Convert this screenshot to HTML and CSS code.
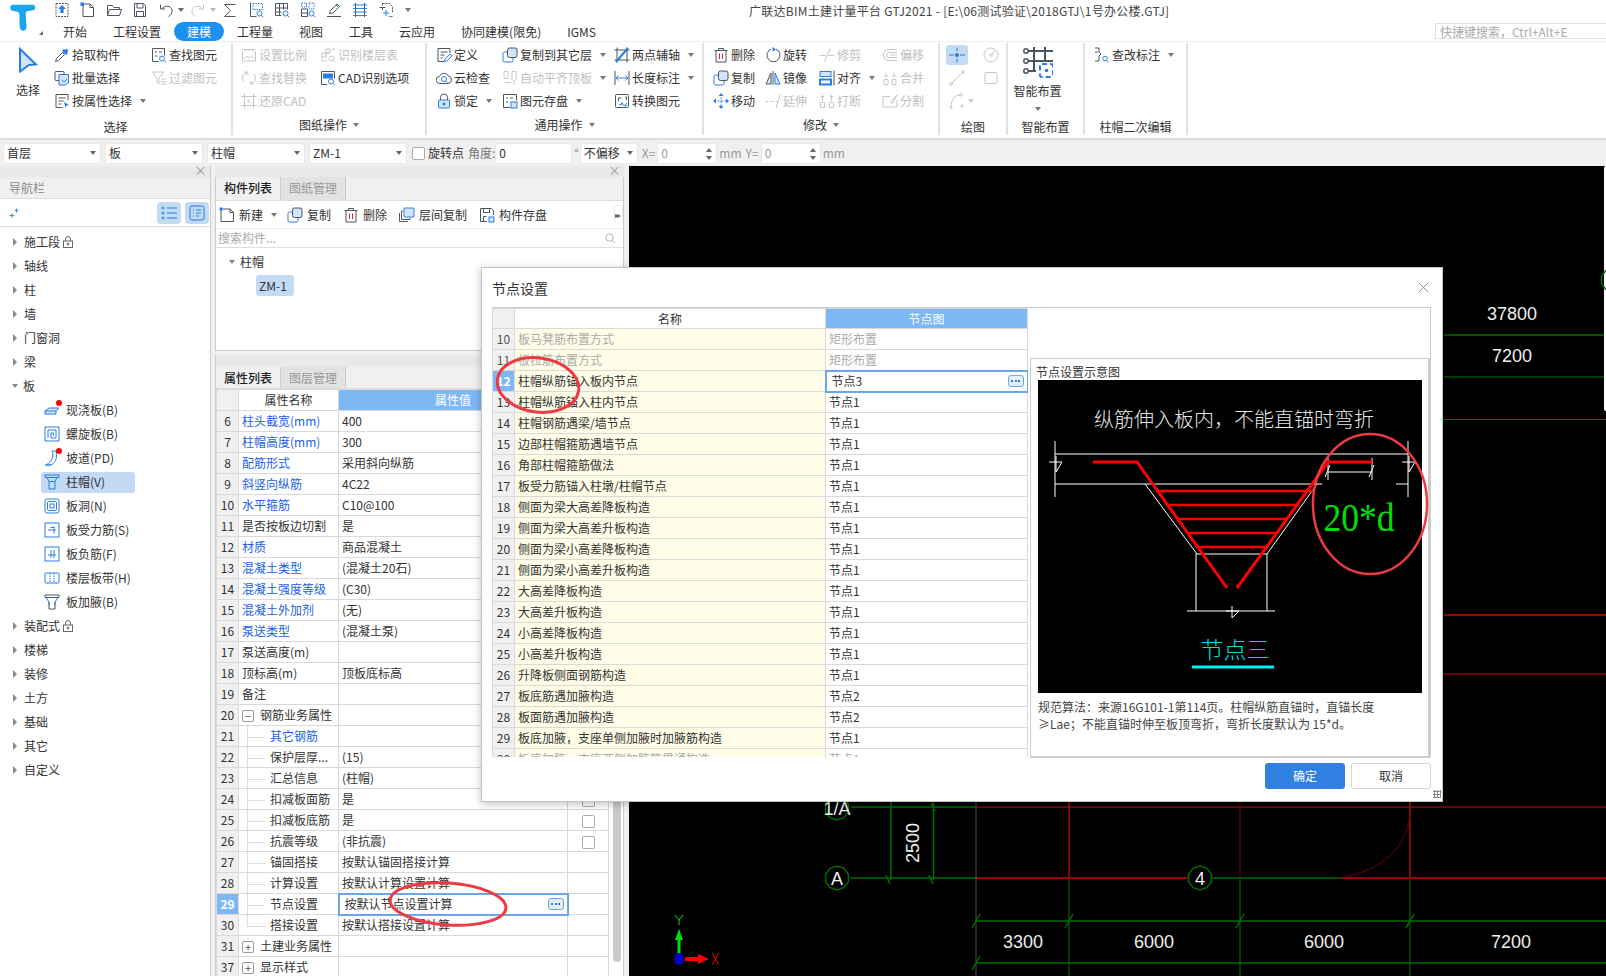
FILE: index.html
```html
<!DOCTYPE html>
<html lang="zh-CN">
<head>
    <meta charset="UTF-8">
    <title>广联达BIM土建计量平台 GTJ2021</title>
    <link rel="stylesheet" href="styles.css">
</head>
<body>
<svg class="sprite" xmlns="http://www.w3.org/2000/svg">
    <symbol id="q-up" viewBox="0 0 16 16"><rect x="2" y="1.5" width="12" height="13" stroke-dasharray="2 1"/><path class="af" d="M8 3l4 4H9.6v4H6.4V7H4z"/></symbol>
    <symbol id="q-new" viewBox="0 0 16 16"><path d="M3 2h7l3.5 3.5v9H3zM10 2v3.5h3.5"/><rect class="af" x="0.5" y="0.5" width="3.5" height="3.5"/></symbol>
    <symbol id="q-open" viewBox="0 0 16 16"><path d="M1.5 13.5v-10h5l1.5 2h5.5v2M1.5 13.5l2-6h12l-2 6z"/></symbol>
    <symbol id="q-save" viewBox="0 0 16 16"><path d="M2.5 1.5h9l2 2v11h-11zM5 2v4h6V2M4.5 14V9.5h7V14"/></symbol>
    <symbol id="q-undo" viewBox="0 0 16 16"><path d="M4 6.5c3-3.5 9-3 10 1.5.6 3-1 5-3.5 6.5M2.5 2.5V7H7"/></symbol>
    <symbol id="q-redo" viewBox="0 0 16 16"><path d="M12 6.5C9 3 3 3.5 2 8c-.6 3 1 5 3.5 6.5M13.5 2.5V7H9"/></symbol>
    <symbol id="q-sum" viewBox="0 0 16 16"><path d="M13.5 2.5H2.5l6 6-6 6h11"/></symbol>
    <symbol id="q-list" viewBox="0 0 16 16"><path d="M2.5 1v13.5h6"/><rect class="as" x="5" y="1.5" width="9.5" height="6" stroke-dasharray="1.5 1"/><circle class="as" cx="11.5" cy="11.5" r="2.5"/><path class="as" d="M13.3 13.3l2 2"/></symbol>
    <symbol id="q-grid" viewBox="0 0 16 16"><path d="M1.5 1.5h12v6M1.5 1.5v12h6M1.5 6h12M1.5 10h6M5.5 1.5v12M9.5 1.5v6"/><circle class="as" cx="11.5" cy="11.5" r="2.5"/><path class="as" d="M13.3 13.3l2 2"/></symbol>
    <symbol id="q-dgrid" viewBox="0 0 16 16"><path d="M1.5 7h6v7.5h-6zM1.5 11h6"/><rect class="as" x="1.5" y="1" width="5" height="4" stroke-dasharray="1.5 1"/><rect class="as" x="9" y="1" width="5" height="6" stroke-dasharray="1.5 1"/><circle class="as" cx="11.5" cy="11.5" r="2.5"/><path class="as" d="M13.3 13.3l2 2"/></symbol>
    <symbol id="q-pen" viewBox="0 0 16 16"><path d="M1 14.5h14M3.5 11.5l1-3L11 2l2.5 2.5L7 11z"/><path class="as" d="M10 3l3 3"/></symbol>
    <symbol id="q-ladder" viewBox="0 0 16 16"><path d="M3.5 1v14M12.5 1v14"/><path class="as" d="M1 3h14M1 6.5h14M1 10h14M1 13.5h14"/></symbol>
    <symbol id="q-plus" viewBox="0 0 16 16"><path d="M4.5 1.5h7l3 3v6M4.5 1.5v3M14.5 14.5h-4" stroke-dasharray="2 1"/><path d="M1.5 5.5h6M4.5 5.5V8"/><path class="as" d="M5 11h6M8 8v6"/></symbol>

    <symbol id="r-select" viewBox="0 0 20 26"><path class="t as2" d="M2 2l16 15.5-7 .5-9 6.5z"/></symbol>
    <symbol id="r-drop" viewBox="0 0 16 16"><path d="M1.5 14.5l1-3 6-6 2 2-6 6z"/><path class="af" d="M8 4l2-2 1 1 1.5-1.5 2 2L13 5l1 1-2 2z"/></symbol>
    <symbol id="r-batch" viewBox="0 0 16 16"><rect x="1" y="1.5" width="9" height="9" rx="1"/><path class="as t" d="M5 4.5h9.5v8l-3 2.5H5z"/><path class="as" d="M8 10l2 2 3-3"/></symbol>
    <symbol id="r-prop" viewBox="0 0 16 16"><path d="M14 7V1.5H2v13h6.500M4.500 5h7M4.500 8h5M4.500 11h3"/><path class="af" d="M10 9l5 3-2.500.6-1 2.400z"/></symbol>
    <symbol id="r-find" viewBox="0 0 16 16"><path d="M7.500 14.500H1.500v-13h12v7"/><path d="M4 5h2M8 5h3M4 9h2"/><circle class="as" cx="11" cy="11.5" r="2.5"/><path class="as" d="M13 13.5l2 2"/></symbol>
    <symbol id="r-filter" viewBox="0 0 16 16"><path d="M1.5 2h11L8 8v6L6 12.5V8zM10 9h5M10 11.5h5M10 14h5"/></symbol>
    <symbol id="r-scale" viewBox="0 0 16 16"><path d="M1.5 4v10h13V4M1.5 2.5h13M4 2.5v2M8 2.5v2M12 2.5v2M3 12l3-3 2 2 2.5-2.5 3 3.5"/></symbol>
    <symbol id="r-floor" viewBox="0 0 16 16"><path d="M6 2h4v4H6zM2 6h4v4H2zM6 6h4M2 10v4h5M6 6v4"/><circle cx="11.5" cy="11.5" r="2.5"/><path d="M13.3 13.3l2 2M12 2h2v2"/></symbol>
    <symbol id="r-repl" viewBox="0 0 16 16"><path d="M7 2a6 6 0 0 0-4 10M9 14a6 6 0 0 0 4-10"/><path d="M5 1v3H8M11 15v-3H8"/></symbol>
    <symbol id="r-cad" viewBox="0 0 16 16"><path d="M7 14.5H1.5v-13h13v7"/><rect class="af" x="3" y="3.5" width="10" height="5"/><circle class="as" cx="11" cy="11.5" r="2.5"/><path class="as" d="M13 13.5l2 2"/></symbol>
    <symbol id="r-crop" viewBox="0 0 16 16"><path d="M0.5 3.5h15M0.5 12.5h15M3.5 0.5v15M12.5 0.5v15M9.5 6l-3 2 3 2"/></symbol>
    <symbol id="r-def" viewBox="0 0 16 16"><path d="M14 6V1.5H2v13h6M4.5 5h7M4.5 8h4M4.5 11h2"/><path class="as" d="M8.5 14.5l.5-2.5 5-5 2 2-5 5z"/></symbol>
    <symbol id="r-cloud" viewBox="0 0 16 16"><path d="M4 13.5a3.500 3.500 0 0 1-.6-7A5 5 0 0 1 12.5 6a3.800 3.800 0 0 1-.6 7.500z"/><circle class="as" cx="8" cy="9" r="2.5"/><path class="as" d="M10 11l1.5 1.5"/></symbol>
    <symbol id="r-lock" viewBox="0 0 16 16"><path d="M4.5 7V4.500a3.500 3.500 0 0 1 7 0V7"/><rect class="t as" x="2.5" y="7" width="11" height="8" rx="1"/><circle class="af" cx="8" cy="11" r="1.5"/></symbol>
    <symbol id="r-copy" viewBox="0 0 16 16"><rect class="t" x="5.5" y="1" width="9.5" height="9.5" rx="2"/><path class="as" d="M5 5H2.500A1.500 1.500 0 0 0 1 6.500v7A1.500 1.500 0 0 0 2.500 15h7a1.500 1.500 0 0 0 1.500-1.500V11"/></symbol>
    <symbol id="r-auto" viewBox="0 0 16 16"><path d="M2 1.5h4M2 1.5v7h4v-7M10 1.5h4v9M10 1.5v9M3 12.5h6M12 10v5"/></symbol>
    <symbol id="r-store" viewBox="0 0 16 16"><path d="M8 14.5H1.5v-13h13v6M4 5h2M8 5h3M4 9h2"/><rect class="t as" x="9" y="9" width="6" height="6"/></symbol>
    <symbol id="r-two" viewBox="0 0 16 16"><path d="M0.5 3h15M0.5 13h15M3 0.5v15M13 0.5v15"/><path class="as2" d="M2 15L14 1"/></symbol>
    <symbol id="r-dim" viewBox="0 0 16 16"><path d="M1 1v14M15 1v14"/><path class="as" d="M2 8h12M4.5 5.5L2 8l2.5 2.5M11.5 5.5L14 8l-2.5 2.5"/></symbol>
    <symbol id="r-conv" viewBox="0 0 16 16"><rect x="1.5" y="1.5" width="13" height="13" rx="1"/><path d="M4.5 5h3M4.5 5v3M11 4h1.5v3"/><path class="as" d="M5 12l3-1 0-2M11 12.5c-2 0-3-1-3-2.5M13 10l-2 2.5 2 .5"/></symbol>
    <symbol id="r-del" viewBox="0 0 16 16"><path d="M1.5 3.5h13M5.5 3.5V1.5h5v2M3 3.5h10v11.5H3z"/><path class="rd" d="M6.5 6.5v5.5M9.5 6.5v5.5"/></symbol>
    <symbol id="r-rot" viewBox="0 0 16 16"><path d="M6 2.2a6.500 6.500 0 1 0 5 0"/><path class="af" d="M7.5 0l3.5 2.5L7.5 4.500z"/></symbol>
    <symbol id="r-trim" viewBox="0 0 16 16"><path d="M0.5 8.5h6M9.5 8.5h6M11 1.5L5.5 15"/></symbol>
    <symbol id="r-off" viewBox="0 0 16 16"><path d="M15 2.5H7A5.500 5.500 0 0 0 7 13.500h8M15 5.500H7A2.500 2.500 0 0 0 7 10.500h8M8 8h7"/></symbol>
    <symbol id="r-mir" viewBox="0 0 16 16"><path d="M8 1v14"/><path class="t" d="M6 3v11H1z"/><path class="t as" d="M10 3v11h5z"/></symbol>
    <symbol id="r-align" viewBox="0 0 16 16"><rect class="as t" x="1" y="1.5" width="11" height="5"/><rect class="as2" x="1" y="9.5" width="11" height="5"/><path d="M15 0.5v15"/></symbol>
    <symbol id="r-merge" viewBox="0 0 16 16"><path d="M2 9.5h4v5H2zM10 9.5h4v5h-4zM4 2.5v5M12 2.5v5M2.5 5L4 7l1.5-2M10.5 5L12 7l1.5-2"/></symbol>
    <symbol id="r-move" viewBox="0 0 16 16"><path class="as" d="M8 1v14M1 8h14" stroke-dasharray="2 1.5"/><path class="af" d="M8 0l2.5 3h-5zM8 16l2.5-3h-5zM0 8l3-2.5v5zM16 8l-3-2.5v5z"/></symbol>
    <symbol id="r-ext" viewBox="0 0 16 16"><path d="M0.5 8.5h3M5.5 8.5h3M11 8.5h1M15 1.5L11 15"/></symbol>
    <symbol id="r-break" viewBox="0 0 16 16"><path d="M1.5 9.5h4v5h-4zM10.5 9.5h4v5h-4zM3.5 2v6M12.5 2v6M2 3l1.5 2L5 3M11 3l1.5 2L14 3"/></symbol>
    <symbol id="r-split" viewBox="0 0 16 16"><path d="M8 3.5H1v10.5h14V7M15 2L9.5 8l-.5 2 2-.5z"/></symbol>
    <symbol id="r-point" viewBox="0 0 16 16"><path class="as" d="M0 8h5M11 8h5M8 0.5v4M8 11.5v4"/><circle class="af" cx="8" cy="8" r="2"/></symbol>
    <symbol id="r-ring" viewBox="0 0 16 16"><circle cx="8" cy="8" r="7"/><circle cx="8" cy="8" r="1.3"/><path d="M9 7l3-3"/></symbol>
    <symbol id="r-line" viewBox="0 0 16 16"><path d="M2.5 13.5L13.5 2.5"/><circle cx="2" cy="14" r="1.3"/><circle cx="14" cy="2" r="1.3"/></symbol>
    <symbol id="r-rect" viewBox="0 0 16 16"><rect x="2" y="2.5" width="12" height="11" rx="1"/></symbol>
    <symbol id="r-arc" viewBox="0 0 16 16"><path d="M2 14C2 7 6 2 11 2"/><circle cx="2" cy="14.5" r="1.2"/><circle cx="12" cy="2" r="1.2"/><circle cx="13" cy="13" r="1.2"/></symbol>
    <symbol id="r-smart" viewBox="0 0 30 31"><g class="th"><path d="M3 4h27M3 14h27M3 24h10M11 0v24M22 0v14"/></g><circle class="wh" cx="3" cy="4" r="2.2"/><circle class="wh" cx="3" cy="14" r="2.2"/><circle class="wh" cx="3" cy="24" r="2.2"/><rect class="th-a" x="17" y="17" width="13" height="13" rx="2" stroke-dasharray="5 3"/><circle class="af" cx="23.5" cy="23.5" r="1.8"/></symbol>
    <symbol id="r-mark" viewBox="0 0 16 16"><path d="M1 1h4v4L7 7 5 9v5H1M4 5H1"/><circle class="as" cx="11" cy="11.5" r="2.3"/><path class="as" d="M12.8 13.3l2 2"/></symbol>

    <symbol id="n-spark" viewBox="0 0 12 12"><path class="as" d="M3.5 6v6M0.5 9h6M9 0.5v5M6.5 3h5"/></symbol>
    <symbol id="n-list" viewBox="0 0 16 16"><path class="as" d="M6 3h10M6 8h10M6 13h10"/><circle class="as" cx="2" cy="3" r="1"/><circle class="as" cx="2" cy="8" r="1"/><circle class="as" cx="2" cy="13" r="1"/></symbol>
    <symbol id="n-det" viewBox="0 0 16 16"><rect class="as" x="1" y="1" width="14" height="14" rx="2"/><path class="as" d="M4 5h1M7 5h5M4 8h1M7 8h5M4 11h1M7 11h3"/></symbol>
    <symbol id="n-lock" viewBox="0 0 10 12"><path d="M2.5 5V3a2.500 2.500 0 0 1 5 0v2"/><rect x="0.5" y="5" width="9" height="6.5"/><circle cx="5" cy="8" r="1"/></symbol>
    <symbol id="n-slab" viewBox="0 0 16 16"><path class="as t" d="M1 9l4-3h10l-3 3v3H1zM1 9h11"/></symbol>
    <symbol id="n-spiral" viewBox="0 0 16 16"><path class="as" d="M1 1h14v14H1zM4 12V4h8v8H7V7h2.500v2.500"/></symbol>
    <symbol id="n-ramp" viewBox="0 0 16 16"><path class="as" d="M8 1c2 4 1 10-6 14h5c6-3 6-9 5-14zM1 15h6"/></symbol>
    <symbol id="n-cap" viewBox="0 0 16 16"><path class="as" d="M1 1h14v2.500H1zM3 3.500L5 7.500h6l2-4M5 7.500V15h6V7.500"/></symbol>
    <symbol id="n-hole" viewBox="0 0 16 16"><rect class="as" x="1" y="1" width="14" height="14" rx="2"/><rect class="as" x="3.5" y="3.5" width="9" height="9" rx="1"/><rect class="as" x="6" y="6" width="4" height="4"/></symbol>
    <symbol id="n-bar" viewBox="0 0 16 16"><rect class="as" x="1" y="1" width="14" height="14"/><path d="M4 8h8M10 4.5v7M6.5 5.5h4"/></symbol>
    <symbol id="n-neg" viewBox="0 0 16 16"><rect class="as" x="1" y="1" width="14" height="14"/><path d="M4 9h8M7 4v8M10 4v8"/></symbol>
    <symbol id="n-band" viewBox="0 0 16 16"><rect class="as" x="1" y="3" width="14" height="10" rx="1"/><path class="as" d="M6 3v10M10 3v10" stroke-dasharray="1.5 1"/></symbol>
    <symbol id="n-haunch" viewBox="0 0 16 16"><path class="dk" d="M1 1h14v2.500H1zM5 8v7h6V8"/><path class="as" d="M2 3.5L5 8v3M14 3.5L11 8v3"/></symbol>
    <symbol id="c-new" viewBox="0 0 16 16"><path d="M2 2h9l3.5 3.5V14.5H2zM11 2v3.5h3.5"/><rect class="af" x="0.5" y="0.5" width="3" height="3"/></symbol>
    <symbol id="c-copy2" viewBox="0 0 16 16"><rect class="t as" x="5" y="1" width="10" height="9" rx="1"/><path d="M4 4H2.500v8.500H11V11M0.5 6v8.500H9"/></symbol>
    <symbol id="c-save" viewBox="0 0 16 16"><path d="M8 14.5H1.5v-13h11l2 2V8M4.5 2v3.500h6V2M4.5 14V9.500h3"/><rect class="t as" x="10" y="10" width="5" height="5"/></symbol>
    <symbol id="c-search" viewBox="0 0 12 12"><circle cx="5" cy="5" r="4"/><path d="M8 8l3 3"/></symbol>
</svg>

<div class="app">
    <header class="top">
        <div class="logo">
            <svg class="logo-t" viewBox="0 0 30 33"><path d="M3 1h24c3 0 3 6 0 6.500l-7 1c-1.500.5-2 2-1.800 4l1 14c.2 5-6.200 7-7.700 2-1-4-.5-10-.7-16 0-2-.8-3-2.300-3.500L3 8C-1 7.500-1 1 3 1z"/></svg>
            <i class="logo-corner"></i>
        </div>
        <div class="top-right">
            <div class="quickbar">
                <svg class="ico"><use href="#q-up"/></svg>
                <svg class="ico"><use href="#q-new"/></svg>
                <svg class="ico"><use href="#q-open"/></svg>
                <svg class="ico"><use href="#q-save"/></svg>
                <span class="q-drop"><svg class="ico"><use href="#q-undo"/></svg><i class="caret"></i></span>
                <span class="q-drop off"><svg class="ico"><use href="#q-redo"/></svg><i class="caret"></i></span>
                <svg class="ico"><use href="#q-sum"/></svg>
                <svg class="ico"><use href="#q-list"/></svg>
                <svg class="ico"><use href="#q-grid"/></svg>
                <svg class="ico"><use href="#q-dgrid"/></svg>
                <svg class="ico"><use href="#q-pen"/></svg>
                <svg class="ico"><use href="#q-ladder"/></svg>
                <svg class="ico"><use href="#q-plus"/></svg>
                <i class="caret q-more"></i>
                <div class="title">广联达BIM土建计量平台 GTJ2021 - [E:\06测试验证\2018GTJ\1号办公楼.GTJ]</div>
            </div>
            <nav class="tabs">
                <a>开始</a><a>工程设置</a><a class="on">建模</a><a>工程量</a><a>视图</a><a>工具</a><a>云应用</a><a>协同建模(限免)</a><a>IGMS</a>
                <div class="shortcut">快捷键搜索，Ctrl+Alt+E</div>
            </nav>
        </div>
    </header>

    <section class="ribbon">
        <div class="rgroup g1">
            <div class="rbody">
                <div class="rbig"><svg class="ico-select"><use href="#r-select"/></svg><span>选择</span></div>
                <div class="ritem"><svg class="ico"><use href="#r-drop"/></svg>拾取构件</div>
                <div class="ritem"><svg class="ico"><use href="#r-batch"/></svg>批量选择</div>
                <div class="ritem"><svg class="ico"><use href="#r-prop"/></svg>按属性选择<i class="caret"></i></div>
                <div class="ritem"><svg class="ico"><use href="#r-find"/></svg>查找图元</div>
                <div class="ritem off"><svg class="ico"><use href="#r-filter"/></svg>过滤图元</div>
            </div>
            <div class="rlabel">选择</div>
        </div>
        <div class="rgroup g2">
            <div class="rbody">
                <div class="ritem off"><svg class="ico"><use href="#r-scale"/></svg>设置比例</div>
                <div class="ritem off"><svg class="ico"><use href="#r-repl"/></svg>查找替换</div>
                <div class="ritem off"><svg class="ico"><use href="#r-crop"/></svg>还原CAD</div>
                <div class="ritem off"><svg class="ico"><use href="#r-floor"/></svg>识别楼层表</div>
                <div class="ritem"><svg class="ico"><use href="#r-cad"/></svg>CAD识别选项</div>
            </div>
            <div class="rlabel menu">图纸操作<i class="caret"></i></div>
        </div>
        <div class="rgroup g3">
            <div class="rbody">
                <div class="ritem"><svg class="ico"><use href="#r-def"/></svg>定义</div>
                <div class="ritem"><svg class="ico"><use href="#r-cloud"/></svg>云检查</div>
                <div class="ritem"><svg class="ico"><use href="#r-lock"/></svg>锁定<i class="caret"></i></div>
                <div class="ritem"><svg class="ico"><use href="#r-copy"/></svg>复制到其它层<i class="caret"></i></div>
                <div class="ritem off"><svg class="ico"><use href="#r-auto"/></svg>自动平齐顶板<i class="caret"></i></div>
                <div class="ritem"><svg class="ico"><use href="#r-store"/></svg>图元存盘<i class="caret"></i></div>
                <div class="ritem"><svg class="ico"><use href="#r-two"/></svg>两点辅轴<i class="caret"></i></div>
                <div class="ritem"><svg class="ico"><use href="#r-dim"/></svg>长度标注<i class="caret"></i></div>
                <div class="ritem"><svg class="ico"><use href="#r-conv"/></svg>转换图元</div>
            </div>
            <div class="rlabel menu">通用操作<i class="caret"></i></div>
        </div>
        <div class="rgroup g4">
            <div class="rbody">
                <div class="ritem"><svg class="ico"><use href="#r-del"/></svg>删除</div>
                <div class="ritem"><svg class="ico"><use href="#r-copy"/></svg>复制</div>
                <div class="ritem"><svg class="ico"><use href="#r-move"/></svg>移动</div>
                <div class="ritem"><svg class="ico"><use href="#r-rot"/></svg>旋转</div>
                <div class="ritem"><svg class="ico"><use href="#r-mir"/></svg>镜像</div>
                <div class="ritem off"><svg class="ico"><use href="#r-ext"/></svg>延伸</div>
                <div class="ritem off"><svg class="ico"><use href="#r-trim"/></svg>修剪</div>
                <div class="ritem"><svg class="ico"><use href="#r-align"/></svg>对齐<i class="caret"></i></div>
                <div class="ritem off"><svg class="ico"><use href="#r-break"/></svg>打断</div>
                <div class="ritem off"><svg class="ico"><use href="#r-off"/></svg>偏移</div>
                <div class="ritem off"><svg class="ico"><use href="#r-merge"/></svg>合并</div>
                <div class="ritem off"><svg class="ico"><use href="#r-split"/></svg>分割</div>
            </div>
            <div class="rlabel menu">修改<i class="caret"></i></div>
        </div>
        <div class="rgroup g5">
            <div class="rbody">
                <div class="rdraw on"><svg class="ico"><use href="#r-point"/></svg></div>
                <div class="rdraw off"><svg class="ico"><use href="#r-line"/></svg></div>
                <div class="rdraw off"><svg class="ico"><use href="#r-arc"/></svg><i class="caret"></i></div>
                <div class="rdraw off"><svg class="ico"><use href="#r-ring"/></svg></div>
                <div class="rdraw off"><svg class="ico"><use href="#r-rect"/></svg></div>
            </div>
            <div class="rlabel">绘图</div>
        </div>
        <div class="rgroup g6">
            <div class="rsmart"><svg class="ico-smart"><use href="#r-smart"/></svg><span>智能布置</span><i class="caret"></i></div>
            <div class="rlabel">智能布置</div>
        </div>
        <div class="rgroup g7">
            <div class="rbody">
                <div class="ritem"><svg class="ico"><use href="#r-mark"/></svg>查改标注<i class="caret"></i></div>
            </div>
            <div class="rlabel">柱帽二次编辑</div>
        </div>
    </section>

    <section class="selectors">
        <div class="combo">首层<i class="caret"></i></div>
        <div class="combo">板<i class="caret"></i></div>
        <div class="combo">柱帽<i class="caret"></i></div>
        <div class="combo">ZM-1<i class="caret"></i></div>
        <label class="rotate"><i class="check"></i>旋转点</label>
        <span class="angle-label">角度:</span>
        <div class="field angle">0</div>
        <span class="degree">°</span>
        <div class="combo offset">不偏移<i class="caret"></i></div>
        <span class="gray-label">X=</span>
        <div class="field coord gray-label">0<i class="spin"></i></div>
        <span class="gray-label">mm</span>
        <span class="gray-label">Y=</span>
        <div class="field coord gray-label">0<i class="spin"></i></div>
        <span class="gray-label">mm</span>
    </section>

    <main class="workspace">
        <aside class="nav">
            <div class="strip"><span class="strip-x">×</span></div>
            <div class="nav-head">导航栏</div>
            <div class="nav-tools">
                <svg class="ico-spark"><use href="#n-spark"/></svg>
                <span class="nav-btn"><svg class="ico"><use href="#n-list"/></svg></span>
                <span class="nav-btn"><svg class="ico"><use href="#n-det"/></svg></span>
            </div>
            <div class="tree">
                <div class="tree-row"><i class="tri"></i>施工段<svg class="ico-lock"><use href="#n-lock"/></svg></div>
                <div class="tree-row"><i class="tri"></i>轴线</div>
                <div class="tree-row"><i class="tri"></i>柱</div>
                <div class="tree-row"><i class="tri"></i>墙</div>
                <div class="tree-row"><i class="tri"></i>门窗洞</div>
                <div class="tree-row"><i class="tri"></i>梁</div>
                <div class="tree-row"><i class="tri open"></i>板</div>
                <div class="tree-child"><svg class="ico"><use href="#n-slab"/></svg>现浇板(B)<i class="dot"></i></div>
                <div class="tree-child"><svg class="ico"><use href="#n-spiral"/></svg>螺旋板(B)</div>
                <div class="tree-child"><svg class="ico"><use href="#n-ramp"/></svg>坡道(PD)<i class="dot"></i></div>
                <div class="tree-child on"><svg class="ico"><use href="#n-cap"/></svg>柱帽(V)</div>
                <div class="tree-child"><svg class="ico"><use href="#n-hole"/></svg>板洞(N)</div>
                <div class="tree-child"><svg class="ico"><use href="#n-bar"/></svg>板受力筋(S)</div>
                <div class="tree-child"><svg class="ico"><use href="#n-neg"/></svg>板负筋(F)</div>
                <div class="tree-child"><svg class="ico"><use href="#n-band"/></svg>楼层板带(H)</div>
                <div class="tree-child"><svg class="ico"><use href="#n-haunch"/></svg>板加腋(B)</div>
                <div class="tree-row"><i class="tri"></i>装配式<svg class="ico-lock"><use href="#n-lock"/></svg></div>
                <div class="tree-row"><i class="tri"></i>楼梯</div>
                <div class="tree-row"><i class="tri"></i>装修</div>
                <div class="tree-row"><i class="tri"></i>土方</div>
                <div class="tree-row"><i class="tri"></i>基础</div>
                <div class="tree-row"><i class="tri"></i>其它</div>
                <div class="tree-row"><i class="tri"></i>自定义</div>
            </div>
        </aside>

        <div class="middle">
            <section class="pane pane-list">
                <div class="strip"><span class="strip-x">×</span></div>
                <div class="pane-tabs"><span class="pane-tab on">构件列表</span><span class="pane-tab">图纸管理</span></div>
                <div class="list-tools">
                    <span class="tool tool-new"><svg class="ico"><use href="#c-new"/></svg>新建<i class="caret"></i></span>
                    <span class="tool"><svg class="ico"><use href="#r-copy"/></svg>复制</span>
                    <span class="tool"><svg class="ico"><use href="#r-del"/></svg>删除</span>
                    <span class="tool"><svg class="ico"><use href="#c-copy2"/></svg>层间复制</span>
                    <span class="tool"><svg class="ico"><use href="#c-save"/></svg>构件存盘</span>
                    <span class="tool-more">▸▸</span>
                </div>
                <div class="list-search">搜索构件...<svg class="ico-search"><use href="#c-search"/></svg></div>
                <div class="list-tree">
                    <div class="list-parent"><i class="tri open"></i>柱帽</div>
                    <div class="list-leaf">ZM-1</div>
                </div>
            </section>

            <section class="pane pane-props">
                <div class="strip"></div>
                <div class="pane-tabs"><span class="pane-tab on">属性列表</span><span class="pane-tab">图层管理</span></div>
                <div class="props-body">
                    <table class="grid props">
                        <colgroup><col class="c-no"><col class="c-name"><col class="c-val"><col class="c-add"></colgroup>
                        <tr class="head"><td class="no"></td><td class="center">属性名称</td><td class="center hot">属性值</td><td></td></tr>
                        <tr><td class="no">6</td><td class="link">柱头截宽(mm)</td><td>400</td><td></td></tr>
                        <tr><td class="no">7</td><td class="link">柱帽高度(mm)</td><td>300</td><td></td></tr>
                        <tr><td class="no">8</td><td class="link">配筋形式</td><td>采用斜向纵筋</td><td></td></tr>
                        <tr><td class="no">9</td><td class="link">斜竖向纵筋</td><td>4C22</td><td></td></tr>
                        <tr><td class="no">10</td><td class="link">水平箍筋</td><td>C10@100</td><td></td></tr>
                        <tr><td class="no">11</td><td>是否按板边切割</td><td>是</td><td></td></tr>
                        <tr><td class="no">12</td><td class="link">材质</td><td>商品混凝土</td><td></td></tr>
                        <tr><td class="no">13</td><td class="link">混凝土类型</td><td>(混凝土20石)</td><td></td></tr>
                        <tr><td class="no">14</td><td class="link">混凝土强度等级</td><td>(C30)</td><td></td></tr>
                        <tr><td class="no">15</td><td class="link">混凝土外加剂</td><td>(无)</td><td></td></tr>
                        <tr><td class="no">16</td><td class="link">泵送类型</td><td>(混凝土泵)</td><td></td></tr>
                        <tr><td class="no">17</td><td>泵送高度(m)</td><td></td><td></td></tr>
                        <tr><td class="no">18</td><td>顶标高(m)</td><td>顶板底标高</td><td></td></tr>
                        <tr><td class="no">19</td><td>备注</td><td></td><td></td></tr>
                        <tr><td class="no">20</td><td class="group"><i class="box">−</i>钢筋业务属性</td><td></td><td></td></tr>
                        <tr><td class="no">21</td><td class="leaf link">其它钢筋</td><td></td><td></td></tr>
                        <tr><td class="no">22</td><td class="leaf">保护层厚...</td><td>(15)</td><td></td></tr>
                        <tr><td class="no">23</td><td class="leaf">汇总信息</td><td>(柱帽)</td><td></td></tr>
                        <tr><td class="no">24</td><td class="leaf">扣减板面筋</td><td>是</td><td class="center"><i class="check"></i></td></tr>
                        <tr><td class="no">25</td><td class="leaf">扣减板底筋</td><td>是</td><td class="center"><i class="check"></i></td></tr>
                        <tr><td class="no">26</td><td class="leaf">抗震等级</td><td>(非抗震)</td><td class="center"><i class="check"></i></td></tr>
                        <tr><td class="no">27</td><td class="leaf">锚固搭接</td><td>按默认锚固搭接计算</td><td></td></tr>
                        <tr><td class="no">28</td><td class="leaf">计算设置</td><td>按默认计算设置计算</td><td></td></tr>
                        <tr><td class="no sel">29</td><td class="leaf">节点设置</td><td class="editing">按默认节点设置计算<i class="more"><b></b><b></b><b></b></i></td><td></td></tr>
                        <tr><td class="no">30</td><td class="leaf leaf-end">搭接设置</td><td>按默认搭接设置计算</td><td></td></tr>
                        <tr><td class="no">31</td><td class="group"><i class="box">+</i>土建业务属性</td><td></td><td></td></tr>
                        <tr><td class="no">37</td><td class="group"><i class="box">+</i>显示样式</td><td></td><td></td></tr>
                    </table>
                    <div class="vbar"></div>
                </div>
            </section>
        </div>

        <div class="canvas">
            <svg class="cad" viewBox="628 166 978 810">
                <defs>
                    <polygon id="oct" points="0,-12 7,-9.7 11.4,-3.7 11.4,3.7 7,9.7 0,12 -7,9.7 -11.4,3.7 -11.4,-3.7 -7,-9.7"/>
                </defs>
                <rect class="side" x="1603" y="166" width="6" height="245" rx="2"/>
                <use class="g-line" href="#oct" x="1612" y="280"/>
                <path class="g-line" d="M1443 335H1603"/>
                <path class="g-dim" d="M1443 377H1603"/>
                <path class="r-line" d="M1443 419.5H1606M1443 674H1606"/>
                <path class="r-thick" d="M1443 615H1606"/>
                <text class="num" x="1511" y="314">37800</text>
                <text class="num" x="1511" y="356">7200</text>

                <path class="g-line" d="M850 807H975M850 878H975M1210 878H1340M890 802V880M932.5 802V880M885 875l4 9M928 875l4 9M930 803l4 8"/>
                <path class="r-line" d="M975 807H1606M1068 802V878M1409 802V878"/>
                <path class="r-thick" d="M975 878H1187M1340 878H1606"/>
                <path class="g-dim" d="M1239 878V976M1068 878V976M1409 878V976"/>
                <path class="thin-gray" d="M975 802V976"/>
                <path class="thin-red" d="M1239 802V878M1340 878C1380 870 1405 850 1409 815"/>
                <path class="g-line" d="M975 921H1606M975 963H1606M971 928l8-14M1064 928l8-14M1235 928l8-14M1405 928l8-14M971 970l8-14"/>
                <use class="g-line" href="#oct" x="836" y="808"/>
                <use class="g-line" href="#oct" x="836" y="878"/>
                <use class="g-line" href="#oct" x="1199" y="878"/>
                <text class="num" x="836" y="809">1/A</text>
                <text class="num" x="836" y="879">A</text>
                <text class="num" x="1199" y="879">4</text>
                <text class="num" transform="translate(912 843) rotate(-90)">2500</text>
                <text class="num" x="1022" y="942">3300</text>
                <text class="num" x="1153" y="942">6000</text>
                <text class="num" x="1323" y="942">6000</text>
                <text class="num" x="1510" y="942">7200</text>

                <path class="axis-y" d="M678 955V938"/>
                <path class="axis-y-h" d="M678 929l4 11h-8z"/>
                <path class="axis-x" d="M684 959h14"/>
                <path class="axis-x-h" d="M708 959l-11 -5v10z"/>
                <ellipse class="axis-o" cx="678" cy="959" rx="5" ry="6"/>
                <path class="axis-lbl-y" d="M674 915l4 5 4-5M678 920v5"/>
                <path class="axis-lbl-x" d="M711 953l7 12M718 953l-7 12"/>
            </svg>
        </div>
    </main>

    <div class="dialog">
        <div class="dlg-title"><span>节点设置</span><svg class="dlg-close" viewBox="0 0 12 12"><path d="M1 1l10 10M11 1L1 11"/></svg></div>
        <div class="dlg-body">
            <div class="dlg-table">
                <table class="grid nodes">
                    <colgroup><col class="n-no"><col class="n-name"><col class="n-val"></colgroup>
                    <tr class="head"><td class="no"></td><td class="center">名称</td><td class="center hot">节点图</td></tr>
                    <tr class="dim"><td class="no">10</td><td class="ylw">板马凳筋布置方式</td><td>矩形布置</td></tr>
                    <tr class="dim"><td class="no">11</td><td class="ylw">板拉筋布置方式</td><td>矩形布置</td></tr>
                    <tr><td class="no sel">12</td><td class="ylw">柱帽纵筋锚入板内节点</td><td class="editing">节点3<i class="more"><b></b><b></b><b></b></i></td></tr>
                    <tr><td class="no">13</td><td class="ylw">柱帽纵筋锚入柱内节点</td><td>节点1</td></tr>
                    <tr><td class="no">14</td><td class="ylw">柱帽钢筋遇梁/墙节点</td><td>节点1</td></tr>
                    <tr><td class="no">15</td><td class="ylw">边部柱帽箍筋遇墙节点</td><td>节点1</td></tr>
                    <tr><td class="no">16</td><td class="ylw">角部柱帽箍筋做法</td><td>节点1</td></tr>
                    <tr><td class="no">17</td><td class="ylw">板受力筋锚入柱墩/柱帽节点</td><td>节点1</td></tr>
                    <tr><td class="no">18</td><td class="ylw">侧面为梁大高差降板构造</td><td>节点1</td></tr>
                    <tr><td class="no">19</td><td class="ylw">侧面为梁大高差升板构造</td><td>节点1</td></tr>
                    <tr><td class="no">20</td><td class="ylw">侧面为梁小高差降板构造</td><td>节点1</td></tr>
                    <tr><td class="no">21</td><td class="ylw">侧面为梁小高差升板构造</td><td>节点1</td></tr>
                    <tr><td class="no">22</td><td class="ylw">大高差降板构造</td><td>节点1</td></tr>
                    <tr><td class="no">23</td><td class="ylw">大高差升板构造</td><td>节点1</td></tr>
                    <tr><td class="no">24</td><td class="ylw">小高差降板构造</td><td>节点1</td></tr>
                    <tr><td class="no">25</td><td class="ylw">小高差升板构造</td><td>节点1</td></tr>
                    <tr><td class="no">26</td><td class="ylw">升降板侧面钢筋构造</td><td>节点1</td></tr>
                    <tr><td class="no">27</td><td class="ylw">板底筋遇加腋构造</td><td>节点2</td></tr>
                    <tr><td class="no">28</td><td class="ylw">板面筋遇加腋构造</td><td>节点2</td></tr>
                    <tr><td class="no">29</td><td class="ylw">板底加腋，支座单侧加腋时加腋筋构造</td><td>节点1</td></tr>
                    <tr class="dim"><td class="no">30</td><td class="ylw">板底加腋，支座两侧加腋筋贯通构造</td><td>节点1</td></tr>
                </table>
            </div>
            <div class="dlg-side">
                <div class="preview">
                    <div class="preview-label">节点设置示意图</div>
                    <svg class="sketch" viewBox="0 0 384 313">
                        <text class="sk-title" x="196" y="38">纵筋伸入板内，不能直锚时弯折</text>
                        <path class="sk-w" d="M17 74H370M17 61V117M370 61V117M17 104H284M358 104H370M107 104L159 174M229 174L279 104M158 174H229M158 174V231M229 174V231M149 231H237M290 92H334M290 78V100M334 78V100M287 97l5-12M331 97l5-12M11 82h13l-6 10V76M364 82h13l-6 10V76M194 226v12l7-7h-13"/>
                        <path class="sk-r" d="M55 82H99L189 208M199 208L290 82H334"/>
                        <path class="sk-r2" d="M118 111H275M129 125H259M139 139H249M150 153H238M160 167H227"/>
                        <text class="sk-green" x="321" y="137" textLength="71" lengthAdjust="spacingAndGlyphs">20*d</text>
                        <text class="sk-cyan" x="197" y="268">节点三</text>
                        <path class="sk-c" d="M154 287H236"/>
                    </svg>
                    <p class="rule">规范算法：来源16G101-1第114页。柱帽纵筋直锚时，直锚长度≥Lae；不能直锚时伸至板顶弯折，弯折长度默认为 15*d。</p>
                </div>
            </div>
        </div>
        <div class="dlg-foot">
            <button class="btn btn-ok">确定</button>
            <button class="btn">取消</button>
            <i class="grip"></i>
        </div>
    </div>

    <svg class="marks" viewBox="0 0 1606 976">
        <ellipse cx="538" cy="385" rx="41" ry="27" transform="rotate(8 538 385)"/>
        <ellipse cx="448" cy="904" rx="58" ry="21" transform="rotate(4 448 904)"/>
        <ellipse class="thin" cx="1370" cy="504" rx="57" ry="70"/>
    </svg>
</div>
</body>
</html>
```
FILE: styles.css
```css
* {
    box-sizing: border-box;
}
html, body {
    margin: 0;
    padding: 0;
}
body {
    font-family: "Noto Sans CJK SC", "Noto Sans", sans-serif;
    font-size: 12px;
    line-height: 16px;
    color: #333;
    background: #f0f0f0;
}
i {
    font-style: normal;
}
.sprite {
    position: absolute;
    width: 0;
    height: 0;
}
.app {
    position: relative;
    width: 1606px;
    height: 976px;
    overflow: hidden;
    display: flex;
    flex-direction: column;
}

/* icons */
.ico, .ico-select, .ico-smart, .ico-spark, .ico-lock, .ico-search {
    fill: none;
    stroke: currentColor;
    stroke-width: 1;
    color: #4a5560;
    --a: #2a7de1;
    --t: #d3e5fa;
    flex: none;
}
.ico {
    width: 16px;
    height: 16px;
}
.off .ico, .off.ritem {
    color: #c6c6c6;
    --a: #c6c6c6;
    --t: #f0f0f0;
}
.as {
    stroke: var(--a);
}
.as2 {
    stroke: var(--a);
    stroke-width: 2;
}
.af {
    fill: var(--a);
    stroke: none;
}
.t {
    fill: var(--t);
}
.rd {
    stroke: #e02020;
}
.dk {
    stroke: #4a5560;
}
.caret {
    display: inline-block;
    width: 0;
    height: 0;
    margin-left: 6px;
    border-left: 3px solid transparent;
    border-right: 3px solid transparent;
    border-top: 4px solid #777;
}

/* title + tabs */
.top {
    display: flex;
    height: 42px;
    background: #fff;
    border-bottom: 1px solid #eee;
}
.logo {
    position: relative;
    width: 50px;
    flex: none;
}
.logo-t {
    position: absolute;
    left: 8px;
    top: 4px;
    width: 30px;
    height: 28px;
    fill: #18a4ee;
}
.logo-corner {
    position: absolute;
    left: 39px;
    top: 31px;
    border-left: 4px solid transparent;
    border-bottom: 4px solid #666;
}
.top-right {
    flex: 1;
    min-width: 0;
}
.quickbar {
    position: relative;
    display: flex;
    align-items: center;
    gap: 10px;
    height: 19px;
    margin-bottom: 2px;
    padding-left: 4px;
}
.q-drop {
    display: flex;
    align-items: center;
}
.q-drop .caret {
    margin-left: 4px;
    margin-right: -4px;
    border-top-color: #666;
}
.q-drop.off .caret {
    border-top-color: #bbb;
}
.q-more {
    margin-left: 1px;
}
.title {
    position: absolute;
    left: 699px;
    top: 3px;
    white-space: nowrap;
    letter-spacing: 0.27px;
    color: #444;
}
.tabs {
    display: flex;
    align-items: center;
    height: 20px;
}
.tabs a {
    padding: 0 13px;
    height: 19px;
    line-height: 19px;
    border-radius: 10px;
    color: #333;
}
.tabs a.on {
    background: #1e90f0;
    color: #fff;
}
.shortcut {
    margin-left: auto;
    width: 171px;
    height: 16px;
    padding-left: 4px;
    line-height: 15px;
    border: 1px solid #e0e0e0;
    border-right: 0;
    color: #aaa;
    background: #fff;
    white-space: nowrap;
}

/* ribbon */
.ribbon {
    display: flex;
    align-items: flex-start;
    height: 98px;
    padding-top: 1px;
    background: #fff;
    border-bottom: 2px solid #ddd;
}
.rgroup {
    position: relative;
    flex: none;
    height: 92px;
    border-right: 2px solid #e2e2e2;
}
.g1 { width: 233px; }
.g2 { width: 194px; }
.g3 { width: 277px; }
.g4 { width: 236px; }
.g5 { width: 68px; }
.g6 { width: 77px; }
.g7 { width: 103px; }
.rbody {
    display: grid;
    grid-auto-flow: column;
    grid-template-rows: repeat(3, 23px);
    height: 71px;
}
.g1 .rbody { padding-left: 16px; grid-template-columns: 38px 97px 70px; }
.g2 .rbody { padding-left: 8px; grid-template-columns: 79px 90px; }
.g3 .rbody { padding-left: 9px; grid-template-columns: 66px 112px 80px; }
.g4 .rbody { padding-left: 9px; grid-template-columns: 52px 54px 63px 50px; }
.g5 .rbody { padding-left: 6px; grid-template-columns: 34px 24px; }
.g7 .rbody { padding-left: 9px; }
.ritem {
    display: flex;
    align-items: center;
    gap: 2px;
    white-space: nowrap;
}
.ritem.off {
    color: #c0c0c0;
}
.rbig {
    grid-row: 1 / 4;
    display: flex;
    flex-direction: column;
    align-items: center;
    width: 24px;
    padding-top: 4px;
}
.ico-select {
    width: 20px;
    height: 26px;
    margin-bottom: 9px;
    --t: #cfe3fb;
}
.rbig span {
    white-space: nowrap;
}
.rdraw {
    display: flex;
    align-items: center;
    align-self: center;
    padding-left: 3px;
    width: 22px;
    height: 20px;
}
.rdraw.on {
    background: #c2daf3;
    border-radius: 3px;
}
.rdraw .caret {
    margin-left: 3px;
    flex: none;
    border-top-color: #ccc;
}
.rlabel {
    position: absolute;
    left: 0;
    right: 0;
    top: 74px;
    height: 20px;
    line-height: 20px;
    display: flex;
    justify-content: center;
    align-items: center;
    white-space: nowrap;
}
.rlabel.menu {
    top: 72px;
}
.rsmart {
    display: flex;
    flex-direction: column;
    align-items: center;
    padding: 4px 16px 0 0;
}
.ico-smart {
    width: 30px;
    height: 31px;
    margin-bottom: 5px;
}
.th {
    stroke: #4a5560;
    stroke-width: 2;
}
.wh {
    fill: #fff;
    stroke: #4a5560;
    stroke-width: 1.5;
}
.th-a {
    stroke: #2a7de1;
    stroke-width: 2;
    fill: #fff;
}
.rsmart .caret {
    margin: 8px 0 0;
}

/* selector row */
.selectors {
    display: flex;
    align-items: center;
    gap: 4px;
    height: 26px;
    padding-left: 3px;
}
.combo, .field {
    display: flex;
    align-items: center;
    height: 21px;
    padding-left: 3px;
    background: #fff;
    border: 1px solid #e8e8e8;
    border-radius: 3px;
}
.combo {
    justify-content: space-between;
    width: 98px;
    padding-right: 4px;
}
.combo .caret {
    border-top-color: #666;
}
.rotate {
    display: flex;
    align-items: center;
    gap: 3px;
    margin-left: 1px;
}
.check {
    display: inline-block;
    width: 13px;
    height: 13px;
    vertical-align: middle;
    background: #fff;
    border: 1px solid #aaa;
    border-radius: 2px;
}
.angle {
    width: 77px;
    margin-left: -4px;
}
.angle-label {
    color: #777;
}
.degree {
    color: #777;
    margin: 0 -3px 0 -2px;
}
.offset {
    width: 58px;
}
.gray-label {
    color: #999;
}
.field.coord {
    position: relative;
    width: 60px;
    margin: 0 -2px;
}
.spin {
    position: absolute;
    right: 4px;
    top: 3px;
    height: 14px;
    width: 6px;
}
.spin::before, .spin::after {
    content: "";
    position: absolute;
    left: 0;
    border-left: 3px solid transparent;
    border-right: 3px solid transparent;
}
.spin::before {
    top: 1px;
    border-bottom: 4px solid #666;
}
.spin::after {
    bottom: 1px;
    border-top: 4px solid #666;
}

/* panes */
.workspace {
    flex: 1;
    display: flex;
    min-height: 0;
}
.nav {
    flex: none;
    width: 211px;
    background: #fff;
    border-right: 1px solid #ccc;
}
.strip {
    position: relative;
    height: 11px;
    background: #e9e9e9;
}
.strip-x {
    position: absolute;
    right: 3px;
    top: -3px;
    color: #999;
    font-size: 13px;
    line-height: 14px;
}
.nav-head {
    height: 22px;
    line-height: 22px;
    padding-left: 9px;
    color: #8a8a8a;
    background: #f0f0f0;
    border-bottom: 1px solid #ddd;
}
.nav-tools {
    display: flex;
    align-items: center;
    justify-content: flex-end;
    gap: 4px;
    height: 28px;
    padding-right: 1px;
    border-bottom: 1px solid #ddd;
}
.ico-spark {
    width: 10px;
    height: 10px;
    margin-right: auto;
    margin-left: 9px;
}
.nav-btn {
    display: flex;
    align-items: center;
    justify-content: center;
    width: 24px;
    height: 22px;
    background: #c2daf3;
    border-radius: 4px;
}
.tree {
    display: flex;
    flex-direction: column;
    padding-top: 3px;
}
.tree-row {
    display: flex;
    align-items: center;
    height: 24px;
    padding-left: 13px;
}
.tri {
    display: inline-block;
    flex: none;
    width: 0;
    height: 0;
    margin-right: 7px;
    border-top: 4px solid transparent;
    border-bottom: 4px solid transparent;
    border-left: 4px solid #888;
}
.tri.open {
    margin-right: 5px;
    margin-left: -1px;
    border-left: 3px solid transparent;
    border-right: 3px solid transparent;
    border-top: 4px solid #888;
    border-bottom: 0;
}
.ico-lock {
    width: 10px;
    height: 12px;
    margin-left: 3px;
    color: #666;
}
.tree-child {
    position: relative;
    display: flex;
    align-items: center;
    gap: 6px;
    width: 94px;
    height: 21px;
    margin: 1.5px 0 1.5px 41px;
    padding-left: 3px;
    border-radius: 3px;
    white-space: nowrap;
}
.tree-child .ico {
    color: #2a7de1;
}
.tree-child.on {
    background: #c2daf3;
}
.dot {
    position: absolute;
    left: 15px;
    top: 0;
    width: 6px;
    height: 6px;
    border-radius: 50%;
    background: #f00;
}
.middle {
    flex: none;
    display: flex;
    flex-direction: column;
    gap: 4px;
    width: 409px;
    margin: 0 5px 0 4px;
}
.pane {
    background: #fff;
    border-left: 1px solid #ccc;
    border-right: 1px solid #ccc;
}
.pane .strip {
    margin: 0 -1px;
}
.pane-list {
    height: 185px;
    border-bottom: 1px solid #ccc;
}
.pane-props {
    flex: 1;
    min-height: 0;
    overflow: hidden;
}
.pane-props .strip {
    height: 12px;
}
.pane-tabs {
    display: flex;
    height: 24px;
    background: #f0f0f0;
    border-bottom: 1px solid #ddd;
}
.pane-props .pane-tabs {
    height: 22px;
}
.pane-tab {
    width: 65px;
    line-height: 22px;
    text-align: center;
    color: #999;
    background: #e2e2e2;
    border-right: 1px solid #ccc;
}
.pane-tab.on {
    color: #222;
    background: #f0f0f0;
    font-weight: 500;
}
.list-tools {
    position: relative;
    display: flex;
    align-items: center;
    height: 28px;
    padding: 1px 0 0 3px;
    border-bottom: 1px solid #eee;
}
.tool {
    display: flex;
    align-items: center;
    gap: 4px;
    margin-right: 12px;
    white-space: nowrap;
}
.tool-new {
    margin-right: 10px;
}
.tool-new .caret {
    margin-left: 4px;
}
.tool-more {
    position: absolute;
    right: 0;
    top: 4px;
    width: 9px;
    height: 18px;
    line-height: 18px;
    font-size: 8px;
    letter-spacing: -2px;
    color: #666;
    border: 1px solid #eee;
    border-radius: 2px;
}
.list-search {
    display: flex;
    align-items: center;
    justify-content: space-between;
    height: 19px;
    padding: 0 7px 0 2px;
    color: #aaa;
    border-bottom: 1px solid #ddd;
}
.ico-search {
    width: 11px;
    height: 11px;
    color: #aaa;
}
.list-parent {
    display: flex;
    align-items: center;
    height: 24px;
    padding-left: 14px;
    margin-top: 2px;
}
.list-leaf {
    width: 38px;
    height: 21px;
    margin: 1px 0 0 40px;
    padding-left: 3px;
    line-height: 21px;
    background: #c2daf3;
    border-radius: 3px;
}

/* grids */
.props-body {
    display: flex;
}
.grid {
    table-layout: fixed;
    border-collapse: collapse;
    flex: none;
}
.grid td {
    height: 21px;
    padding: 0 3px;
    border: 1px solid #d9d9d9;
    white-space: nowrap;
    overflow: hidden;
    line-height: 16px;
}
.grid .head td {
    height: 20px;
}
.props .head td {
    height: 21px;
}
.props { width: 392px; }
.c-no { width: 22px; }
.c-name { width: 100px; }
.c-val { width: 229px; }
.c-add { width: 41px; }
.grid td.no {
    padding: 0;
    text-align: center;
    background: #f0f0f0;
}
.grid td.center {
    text-align: center;
}
.grid td.hot {
    color: #fff;
    background: #7db8f5;
}
.grid td.sel {
    color: #fff;
    font-weight: 700;
    background: #7db8f5;
}
.link {
    color: #1a5fe0;
}
.grid td.group {
    padding-left: 3px;
    overflow: visible;
}
.box {
    display: inline-block;
    width: 12px;
    height: 12px;
    margin-right: 6px;
    font-size: 11px;
    line-height: 10px;
    text-align: center;
    vertical-align: -1px;
    border: 1px solid #999;
    border-radius: 2px;
    color: #555;
}
.grid td.leaf {
    position: relative;
    padding-left: 31px;
}
.leaf::before {
    content: "";
    position: absolute;
    left: 8px;
    top: -1px;
    width: 17px;
    height: 12px;
    border-left: 1px solid #ddd;
    border-bottom: 1px solid #ddd;
}
.leaf:not(.leaf-end)::after {
    content: "";
    position: absolute;
    left: 8px;
    top: 11px;
    height: 11px;
    border-left: 1px solid #ddd;
}
.grid td.editing {
    position: relative;
    padding-left: 5px;
    border: 2px solid #6ba6e8;
}
.more {
    position: absolute;
    right: 3px;
    top: 3px;
    display: flex;
    align-items: center;
    justify-content: center;
    gap: 1.5px;
    width: 16px;
    height: 12px;
    background: #e6eefa;
    border: 1px solid #6ba6e8;
    border-radius: 3px;
}
.more b {
    width: 2px;
    height: 2px;
    background: #2a7de1;
}
.vbar {
    width: 8px;
    height: 573px;
    margin-left: 4px;
    background: #c9c9c9;
    border-radius: 4px;
}

/* cad canvas */
.canvas {
    flex: 1;
    min-width: 0;
    background: #000;
}
.cad {
    display: block;
    width: 978px;
    height: 810px;
    fill: none;
}
.side {
    fill: #fff;
}
.g-line {
    stroke: #006d00;
    stroke-width: 1.5;
}
.g-dim {
    stroke: #005000;
    stroke-width: 1.5;
}
.r-line {
    stroke: #d01010;
    stroke-width: 1.2;
}
.r-thick {
    stroke: #a00000;
    stroke-width: 2;
}
.thin-gray {
    stroke: #666;
    stroke-width: 0.8;
}
.thin-red {
    stroke: #700000;
    stroke-width: 1;
}
.num {
    font-family: "Liberation Sans", sans-serif;
    font-size: 18px;
    fill: #eee;
    text-anchor: middle;
    dominant-baseline: central;
}
.axis-y {
    stroke: #00e000;
    stroke-width: 3;
}
.axis-y-h {
    fill: #00e000;
}
.axis-x {
    stroke: #f00;
    stroke-width: 4;
}
.axis-x-h {
    fill: #f00;
}
.axis-o {
    fill: #0000c8;
}
.axis-lbl-y {
    stroke: #00e000;
}
.axis-lbl-x {
    stroke: #f00;
}

/* node dialog */
.dialog {
    position: absolute;
    left: 481px;
    top: 267px;
    width: 962px;
    height: 535px;
    display: flex;
    flex-direction: column;
    background: #fff;
    border: 1px solid #c4c4c4;
    box-shadow: 0 2px 8px rgba(0, 0, 0, 0.25);
}
.dlg-title {
    display: flex;
    align-items: center;
    justify-content: space-between;
    height: 39px;
    padding: 0 13px 0 10px;
    font-size: 14px;
    color: #333;
}
.dlg-close {
    width: 11px;
    height: 11px;
    stroke: #888;
    stroke-width: 1;
    fill: none;
}
.dlg-body {
    display: flex;
    height: 450px;
    margin: 0 11px 0 10px;
    border-top: 1px solid #ccc;
    border-right: 1px solid #ccc;
}
.dlg-table {
    flex: none;
    width: 536px;
    height: 449px;
    overflow: hidden;
}
.nodes {
    width: 535px;
}
.n-no { width: 22px; }
.n-name { width: 311px; }
.n-val { width: 202px; }
.grid td.ylw {
    background: #fffde8;
}
.dim td {
    color: #aaa;
}
.dim td.no {
    color: #555;
}
.dlg-side {
    flex: 1;
    min-width: 0;
    padding: 50px 0 0 2px;
}
.preview {
    height: 400px;
    padding: 5px 7px 0 5px;
    border: 1px solid #ccc;
    border-right: 2px solid #ccc;
    border-bottom: 2px solid #ccc;
}
.preview-label {
    height: 16px;
    line-height: 16px;
    white-space: nowrap;
}
.sketch {
    display: block;
    width: 384px;
    height: 313px;
    margin-left: 2px;
    background: #000;
    fill: none;
}
.sk-title {
    fill: #e8e8e8;
    font-size: 20px;
    font-weight: 300;
    text-anchor: middle;
    dominant-baseline: central;
}
.sk-w {
    stroke: #fff;
    stroke-width: 1;
}
.sk-r {
    stroke: #f00;
    stroke-width: 3;
}
.sk-r2 {
    stroke: #f00;
    stroke-width: 2.5;
}
.sk-green {
    fill: #00e000;
    font-family: "Liberation Serif", serif;
    font-size: 40px;
    text-anchor: middle;
    dominant-baseline: central;
}
.sk-cyan {
    fill: #00e0e0;
    font-size: 23px;
    font-weight: 300;
    text-anchor: middle;
    dominant-baseline: central;
}
.sk-c {
    stroke: #00f0f0;
    stroke-width: 3;
}
.rule {
    margin: 5px 0 0 2px;
    width: 345px;
    line-height: 17px;
    color: #444;
}
.dlg-foot {
    position: relative;
    display: flex;
    justify-content: flex-end;
    gap: 6px;
    padding: 6px 11px 0 0;
}
.btn {
    width: 80px;
    height: 26px;
    padding: 0;
    font: inherit;
    color: #333;
    background: #fff;
    border: 1px solid #d5d5d5;
    border-radius: 3px;
}
.btn-ok {
    color: #fff;
    background: #2f80e0;
    border-color: #2f80e0;
}
.grip {
    position: absolute;
    right: 1px;
    bottom: -9px;
    width: 8px;
    height: 8px;
    background-image: radial-gradient(#888 1px, transparent 1.2px);
    background-size: 3px 3px;
}

/* hand drawn marks over the screenshot */
.marks {
    position: absolute;
    left: 0;
    top: 0;
    width: 1606px;
    height: 976px;
    fill: none;
    stroke: #ee3a42;
    stroke-width: 3;
    pointer-events: none;
}
.marks .thin {
    stroke-width: 2.5;
}
```
